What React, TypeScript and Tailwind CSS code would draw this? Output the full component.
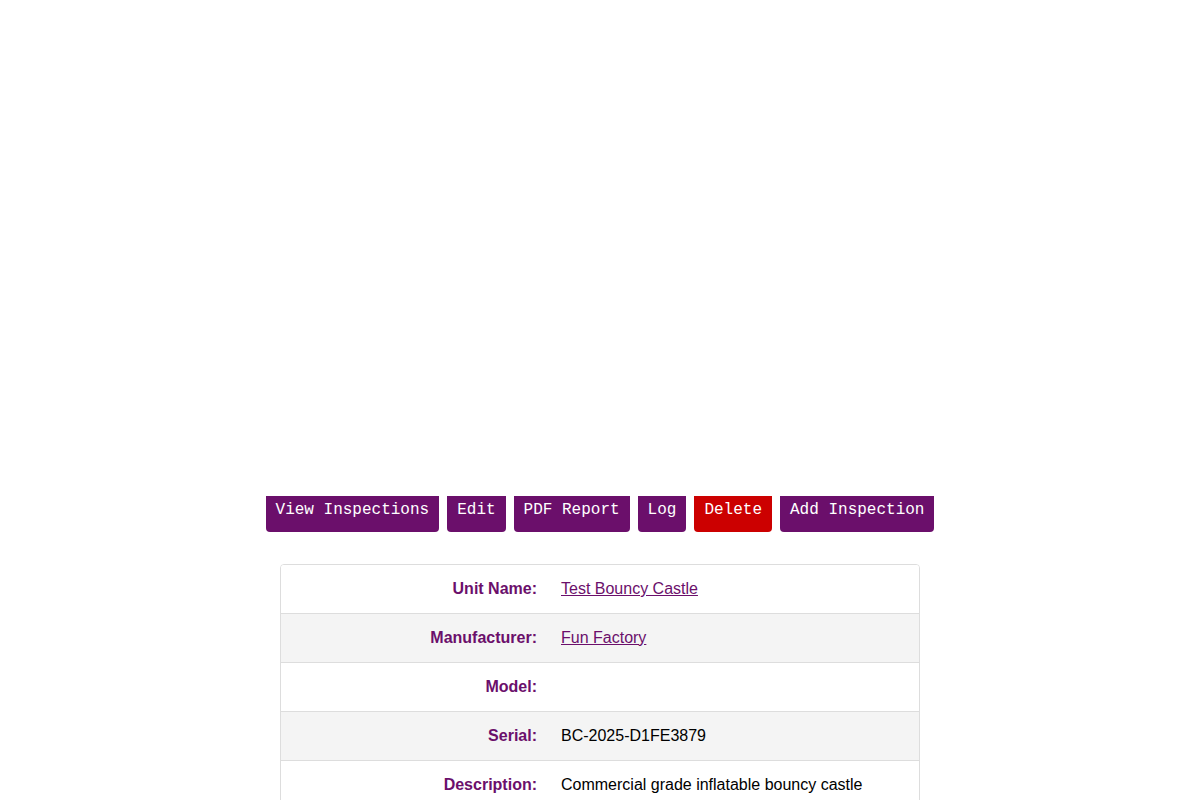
import React from "react";

const buttons: { label: string; red?: boolean }[] = [
  { label: "View Inspections" },
  { label: "Edit" },
  { label: "PDF Report" },
  { label: "Log" },
  { label: "Delete", red: true },
  { label: "Add Inspection" },
];

const rows: { label: string; value: string; link?: boolean }[] = [
  { label: "Unit Name:", value: "Test Bouncy Castle", link: true },
  { label: "Manufacturer:", value: "Fun Factory", link: true },
  { label: "Model:", value: "" },
  { label: "Serial:", value: "BC-2025-D1FE3879" },
  { label: "Description:", value: "Commercial grade inflatable bouncy castle" },
];

export default function App() {
  return (
    <div className="min-h-[800px] bg-white font-['Liberation_Sans',Arial,sans-serif] text-black">
      <div className="pt-[496px] flex justify-center gap-2">
        {buttons.map((b) => (
          <button
            key={b.label}
            className={`h-[36px] px-[10px] pt-[2px] pb-[10px] rounded-b-[4px] font-['Liberation_Mono','Courier_New',monospace] text-[16px] leading-[24px] text-white ${
              b.red ? "bg-[#cc0000]" : "bg-[#6b0f6b]"
            }`}
          >
            {b.label}
          </button>
        ))}
      </div>
      <div className="mt-[32px] mx-auto w-[640px] border border-[#dddddd] rounded-[4px] overflow-hidden divide-y divide-[#dddddd]">
        {rows.map((r, i) => (
          <div
            key={r.label}
            className={`grid grid-cols-[268px_1fr] items-center text-[16px] leading-[24px] ${
              i % 2 === 1 ? "bg-[#f4f4f4]" : "bg-white"
            }`}
          >
            <div className="py-[12px] text-right pr-[12px] font-bold text-[#6b0f6b]">{r.label}</div>
            <div className="py-[12px] pl-[12px]">
              {r.link ? (
                <a href="#" className="underline text-[#6b0f6b]">
                  {r.value}
                </a>
              ) : (
                r.value
              )}
            </div>
          </div>
        ))}
      </div>
    </div>
  );
}
